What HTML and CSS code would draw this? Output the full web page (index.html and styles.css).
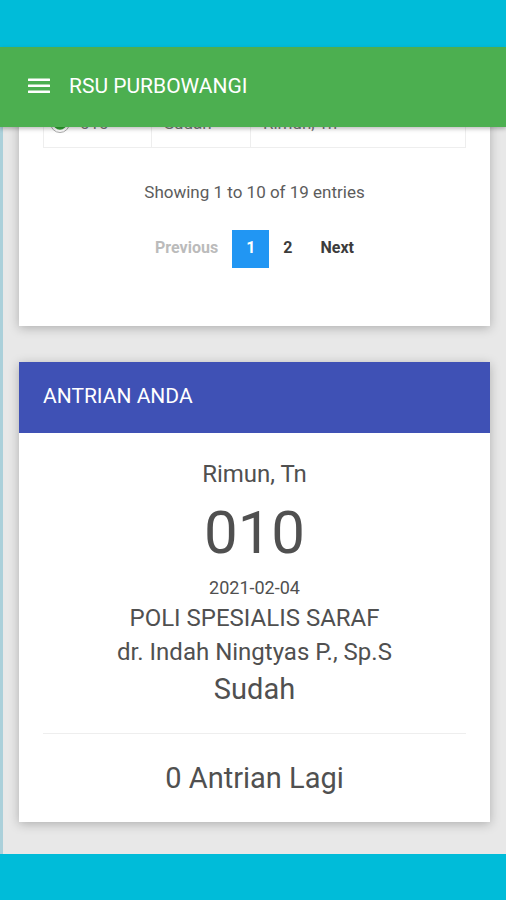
FILE: index.html
```html
<!DOCTYPE html>
<html lang="id">
<head>
<meta charset="utf-8">
<meta name="viewport" content="width=device-width, initial-scale=1">
<title>RSU PURBOWANGI</title>
<link rel="stylesheet" href="styles.css">
</head>
<body>
<header class="topbar">
  <button class="menu-button" type="button" aria-label="Menu">
    <svg viewBox="0 0 22 16" width="22" height="16" fill="currentColor" aria-hidden="true">
      <rect y="0.5" width="22" height="2.5" rx="0.5"/>
      <rect y="6.5" width="22" height="2.5" rx="0.5"/>
      <rect y="12.5" width="22" height="2.5" rx="0.5"/>
    </svg>
  </button>
  <h1 class="topbar-title">RSU PURBOWANGI</h1>
</header>
<main class="content">
  <section class="card">
    <div class="list-body">
      <table class="queue-table">
        <tbody>
          <tr>
            <td class="col-number"><span class="number"><svg viewBox="0 0 20 20" width="20" height="20" aria-hidden="true"><circle cx="10" cy="10" r="8" fill="#31a332" stroke="#fff" stroke-width="2.5"/><circle cx="10" cy="10" r="9.5" fill="none" stroke="#aaa"/><path d="M10 6v8M6 10h8" stroke="#fff" stroke-width="2"/></svg>010</span></td>
            <td class="col-status">Sudah</td>
            <td>Rimun, Tn</td>
          </tr>
        </tbody>
      </table>
      <p class="entries">Showing 1 to 10 of 19 entries</p>
      <nav class="pagination" aria-label="Pagination">
        <button class="page" type="button" disabled>Previous</button>
        <a class="page current" href="#" aria-current="page">1</a>
        <a class="page" href="#">2</a>
        <a class="page" href="#">Next</a>
      </nav>
    </div>
  </section>
  <section class="card">
    <h2 class="card-header">ANTRIAN ANDA</h2>
    <div class="ticket">
      <p class="medium">Rimun, Tn</p>
      <p class="number-large">010</p>
      <p class="date">2021-02-04</p>
      <p class="medium">POLI SPESIALIS SARAF</p>
      <p class="medium">dr. Indah Ningtyas P., Sp.S</p>
      <p class="large">Sudah</p>
      <hr class="divider">
      <p class="large">0 Antrian Lagi</p>
    </div>
  </section>
</main>
</body>
</html>
```
FILE: styles.css
```css
* {
  box-sizing: border-box;
}

body {
  display: flex;
  flex-direction: column;
  height: 100vh;
  margin: 0;
  padding: 47px 0 46px;
  background: #00bcd9;
  color: #505050;
  font-family: Roboto, "Liberation Sans", sans-serif;
}

h1,
h2,
p {
  margin: 0;
  font-weight: 400;
}

.topbar {
  z-index: 1;
  display: flex;
  flex: none;
  align-items: center;
  gap: 19px;
  height: 80px;
  padding: 0 28px 2px;
  background: #4caf50;
  box-shadow: 0 2px 4px rgba(0, 0, 0, 0.25);
  color: #fff;
}

.menu-button {
  display: flex;
  padding: 0;
  border: 0;
  background: none;
  color: inherit;
}

.topbar-title {
  font-size: 21px;
  line-height: 28px;
}

.content {
  display: flex;
  flex: 1;
  flex-direction: column;
  justify-content: flex-end;
  gap: 36px;
  min-height: 0;
  padding: 0 16px 32px;
  overflow: hidden;
  border-left: 3px solid #abd0da;
  background: #e8e8e8;
}

.card {
  flex: none;
  background: #fff;
  box-shadow: 0 2px 10px rgba(0, 0, 0, 0.25);
}

.list-body {
  padding: 24px 24px 58px;
}

.queue-table {
  width: 100%;
  border-collapse: collapse;
  table-layout: fixed;
  color: #777;
  font-size: 17px;
  line-height: 24px;
}

.queue-table td {
  padding: 12px;
  border: 1px solid #eee;
}

.queue-table .col-number {
  width: 108px;
  padding-left: 6px;
}

.queue-table .col-status {
  width: 99px;
}

.number {
  display: flex;
  align-items: center;
  gap: 10px;
}

.entries {
  padding: 32px 0 26px;
  color: #5c5c5c;
  font-size: 17px;
  line-height: 24px;
  text-align: center;
}

.pagination {
  display: flex;
  justify-content: center;
}

.page {
  padding: 0 14px 2px;
  border: 0;
  background: none;
  color: #3c3c3c;
  font: 700 16px/36px Roboto, "Liberation Sans", sans-serif;
  text-decoration: none;
}

.page:disabled {
  color: #bbb;
}

.page.current {
  background: #2196f3;
  color: #fff;
}

.card-header {
  padding: 23px 24px 25px;
  background: #3f51b5;
  color: #fff;
  font-size: 21px;
  line-height: 23px;
}

.ticket {
  padding: 24px;
  text-align: center;
}

.medium {
  font-size: 24px;
  line-height: 34px;
}

.number-large {
  font-size: 60px;
  line-height: 84px;
}

.date {
  font-size: 18px;
  line-height: 26px;
}

.large {
  font-size: 29px;
  line-height: 40px;
}

.divider {
  margin: 24px 0;
  border: 0;
  border-top: 1px solid #eee;
}
```
